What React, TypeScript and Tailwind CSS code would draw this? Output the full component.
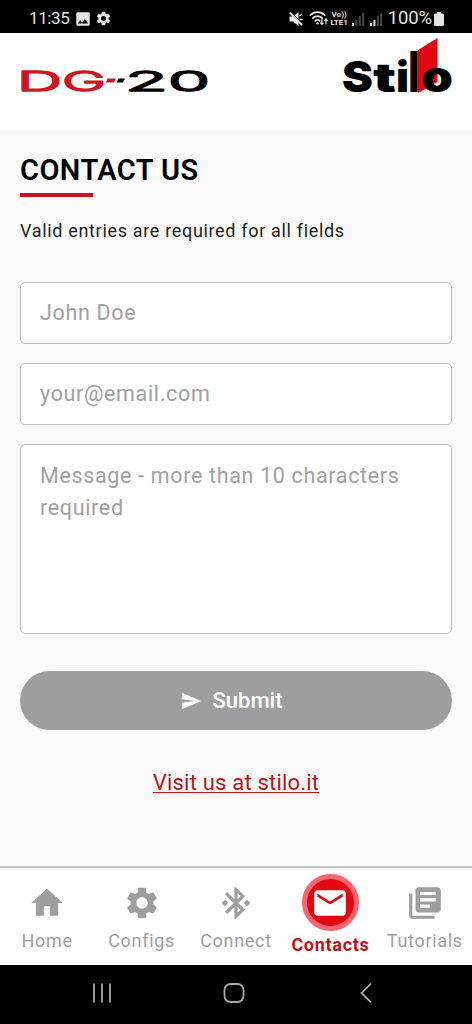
import React, { useState } from "react";
import type { IconType } from "react-icons";
import {
  MdBluetoothConnected,
  MdHome,
  MdImage,
  MdLibraryBooks,
  MdMail,
  MdSend,
  MdSettings,
} from "react-icons/md";

interface NavItem {
  label: string;
  icon: IconType;
}

const navItems: NavItem[] = [
  { label: "Home", icon: MdHome },
  { label: "Configs", icon: MdSettings },
  { label: "Connect", icon: MdBluetoothConnected },
  { label: "Contacts", icon: MdMail },
  { label: "Tutorials", icon: MdLibraryBooks },
];

const MuteIcon = () => (
  <svg width="14" height="14" viewBox="0 0 14 14">
    <path d="M.5 4.500h3.500L9.500 0v14L4 9.500H.5z" fill="#e5e5e5" />
    <path d="M10.500 4 13 2M10.500 7.500h3" stroke="#e5e5e5" strokeWidth="1.300" />
    <path d="M2.200.4 13.800 12" stroke="#000" strokeWidth="1" />
    <path d="M.7.7 13 13" stroke="#e5e5e5" strokeWidth="1.900" />
  </svg>
);

const WifiIcon = () => (
  <svg width="20" height="17" viewBox="0 0 20 17" fill="none">
    <g stroke="#e5e5e5" strokeWidth="1.7" strokeLinecap="round">
      <path d="M1.2 5.2C5 1 12 1 15.8 5.2" />
      <path d="M3.8 8.2c2.6-2.7 6.8-2.7 9.4 0" />
      <path d="M6.3 10.9c1.3-1.2 3.1-1.2 4.4 0" />
    </g>
    <circle cx="8.5" cy="13.3" r="1.2" fill="#e5e5e5" />
    <path
      d="M12.9 9v5M11.3 12.6l1.6 1.8 1.6-1.8M17 14.4v-5M15.4 10.8 17 9l1.6 1.8"
      stroke="#e5e5e5"
      strokeWidth="1.2"
    />
  </svg>
);

const SignalIcon = ({ level }: { level: number }) => (
  <svg width="13" height="14" viewBox="0 0 13 14">
    {[3, 6, 10, 13].map((height, index) => (
      <rect
        key={height}
        x={index * 3.4}
        y={14 - height}
        width="2"
        height={height}
        fill={index < level ? "#e5e5e5" : "#484848"}
      />
    ))}
  </svg>
);

const StatusBar = () => (
  <div className="flex h-[33px] shrink-0 items-center bg-black pt-1 pr-[28px] pl-[29px] text-[#e5e5e5]">
    <span className="text-[17px] tracking-[-0.4px]">11:35</span>
    <MdImage className="ml-[5px] h-[18px] w-[18px]" />
    <MdSettings className="ml-[3px] h-[17px] w-[17px]" />
    <div className="ml-auto flex items-center">
      <MuteIcon />
      <div className="ml-[6px]">
        <WifiIcon />
      </div>
      <div className="ml-px flex w-[19px] flex-col items-center text-[8px] leading-[8px] font-bold">
        <span>Vo))</span>
        <span>LTE1</span>
      </div>
      <div className="ml-[3px] flex gap-[5px]">
        <SignalIcon level={1} />
        <SignalIcon level={2} />
      </div>
      <span className="ml-[5px] text-[18.500px] tracking-[-0.1px]">100%</span>
      <svg className="ml-[2px]" width="10" height="14" viewBox="0 0 10 14">
        <path
          d="M3 0h4v1.5h1.5Q10 1.500 10 3v9.500q0 1.500-1.500 1.500h-7Q0 14 0 12.500V3q0-1.500 1.500-1.500H3z"
          fill="#e5e5e5"
        />
      </svg>
    </div>
  </div>
);

const ProductLogo = () => (
  <svg
    className="overflow-visible font-[Inter,sans-serif]"
    width="190"
    height="24"
    viewBox="0 0 190 24"
  >
    <g fontSize="27.500" fontWeight="300" strokeWidth="1.400" strokeLinejoin="round">
      <text y="21.500" fill="#cf151d" stroke="#cf151d">
        <tspan x="-3" textLength="45" lengthAdjust="spacingAndGlyphs">
          D
        </tspan>
        <tspan x="42" textLength="44" lengthAdjust="spacingAndGlyphs">
          G
        </tspan>
      </text>
      <text y="21.500" fill="#000" stroke="#000">
        <tspan x="105" textLength="43" lengthAdjust="spacingAndGlyphs">
          2
        </tspan>
        <tspan x="148" textLength="42" lengthAdjust="spacingAndGlyphs">
          0
        </tspan>
      </text>
    </g>
    <path d="M87.500 9.500H96l-2 4h-8z" fill="#cf151d" />
    <path d="M98.500 9.500h6.500l-2 4h-6.500z" fill="#000" />
  </svg>
);

const BrandLogo = () => (
  <svg
    className="overflow-visible font-[Inter,sans-serif]"
    width="112"
    height="58"
    viewBox="0 0 112 58"
  >
    <path d="M76 12 95.500 0v44L76 55z" fill="#e30613" />
    <text y="54" fill="#000" fontWeight="900">
      <tspan x="0" fontSize="43" textLength="31" lengthAdjust="spacingAndGlyphs">
        S
      </tspan>
      <tspan x="31" fontSize="40" textLength="23" lengthAdjust="spacingAndGlyphs">
        t
      </tspan>
      <tspan x="54" fontSize="42" textLength="13" lengthAdjust="spacingAndGlyphs">
        i
      </tspan>
      <tspan x="66.500" fontSize="56" textLength="11" lengthAdjust="spacingAndGlyphs">
        l
      </tspan>
      <tspan x="79" fontSize="43" textLength="32" lengthAdjust="spacingAndGlyphs">
        o
      </tspan>
    </text>
  </svg>
);

const Header = () => (
  <header className="flex h-[97px] shrink-0 items-start justify-between bg-white pr-[18px] pl-5">
    <div className="pt-[36px]">
      <ProductLogo />
    </div>
    <div className="pt-[5px]">
      <BrandLogo />
    </div>
  </header>
);

const ContactForm = () => {
  const [name, setName] = useState("");
  const [email, setEmail] = useState("");
  const [message, setMessage] = useState("");

  const fieldClass =
    "block w-full rounded-[5px] border border-[#bdbdbd] bg-white px-[19px] text-[21.5px] tracking-[0.66px] outline-none placeholder:text-[#a0a0a0]";

  return (
    <form
      className="flex flex-col"
      onSubmit={(e) => {
        e.preventDefault();
      }}
    >
      <input
        className={`${fieldClass} h-[62px] pb-[2px]`}
        placeholder="John Doe"
        value={name}
        onChange={(e) => setName(e.target.value)}
      />
      <input
        className={`${fieldClass} mt-[19px] h-[62px] pb-[2px]`}
        placeholder="your@email.com"
        value={email}
        onChange={(e) => setEmail(e.target.value)}
      />
      <textarea
        className={`${fieldClass} mt-[19px] h-[190px] resize-none pt-[15px] leading-[32px]`}
        placeholder="Message - more than 10 characters required"
        value={message}
        onChange={(e) => setMessage(e.target.value)}
      />
      <button
        type="submit"
        className="mt-[37px] flex h-[59px] items-center justify-center gap-[10px] rounded-full bg-[#9e9e9e] pr-[9px] text-[22px] font-medium text-white"
      >
        <MdSend className="h-[22px] w-[22px]" />
        Submit
      </button>
    </form>
  );
};

const BottomNav = () => {
  const [active, setActive] = useState("Contacts");

  return (
    <nav className="flex h-[99px] shrink-0 border-t-2 border-[#c4c4c4] bg-white">
      {navItems.map(({ label, icon: Icon }) =>
        label === active ? (
          <button
            key={label}
            className="flex flex-1 basis-0 flex-col items-center pt-[6px] text-[#b9141c]"
          >
            <span className="flex h-[57px] w-[57px] items-center justify-center rounded-full border-[5px] border-[#fa6571] bg-[#e30613] text-white">
              <Icon className="h-[38px] w-[38px]" />
            </span>
            <span className="mt-[2px] text-[18px] leading-[24px] font-bold tracking-[0.7px]">
              {label}
            </span>
          </button>
        ) : (
          <button
            key={label}
            onClick={() => setActive(label)}
            className="flex flex-1 basis-0 flex-col items-center pt-[16px] text-[#9e9e9e]"
          >
            <Icon className="h-[38px] w-[38px]" />
            <span className="mt-[7px] text-[18px] leading-[24px] tracking-[0.7px]">
              {label}
            </span>
          </button>
        )
      )}
    </nav>
  );
};

const SystemNav = () => (
  <div className="flex h-[59px] shrink-0 items-center justify-between bg-black pr-[100px] pb-[3px] pl-[92px]">
    <svg width="20" height="20" viewBox="0 0 20 20" stroke="#a8a8a8" strokeWidth="1.800">
      <path d="M2 .5v19M10 .5v19M18 .5v19" />
    </svg>
    <svg className="mr-[4px]" width="22" height="20" viewBox="0 0 22 20" fill="none" stroke="#a8a8a8" strokeWidth="1.800">
      <rect x="1.500" y="1" width="19" height="18" rx="6" />
    </svg>
    <svg width="12" height="20" viewBox="0 0 12 20" fill="none" stroke="#a8a8a8" strokeWidth="1.800">
      <path d="M11 .7 1.500 10l9.500 9.300" />
    </svg>
  </div>
);

export default function App() {
  return (
    <div className="flex h-screen flex-col overflow-hidden bg-[#fafafa] font-[Roboto,sans-serif] text-black">
      <StatusBar />
      <Header />
      <main className="flex min-h-0 flex-1 flex-col px-5">
        <h1 className="mt-[20px] text-[29px] leading-[40px] font-semibold tracking-[0.45px]">
          CONTACT US
        </h1>
        <div className="mt-[3px] h-1 w-[73px] bg-[#c5141c]" />
        <p className="mt-[22px] mb-[39px] text-[18px] leading-[24px] tracking-[0.67px] text-[#1c1c1c]">
          Valid entries are required for all fields
        </p>
        <ContactForm />
        <a
          href="#"
          className="mt-[38px] self-center text-[22px] leading-[30px] tracking-[0.2px] text-[#b9141c] underline decoration-1 underline-offset-2"
        >
          Visit us at stilo.it
        </a>
      </main>
      <BottomNav />
      <SystemNav />
    </div>
  );
}
